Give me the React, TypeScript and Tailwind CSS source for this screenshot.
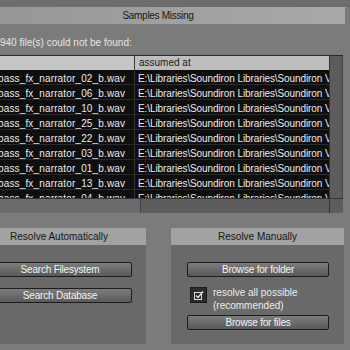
import React from 'react'

const rows = ['02', '06', '10', '25', '22', '03', '01', '13', '04']

const Button = ({ label }: { label: string }) => (
  <div className="h-[15px] rounded-[2px] border border-[#1c1c1c] bg-linear-to-b from-[#7c7c7c] to-[#5a5a5a] flex items-center justify-center text-[10px] leading-none text-[#f4f4f4] tracking-[-0.2px]">
    {label}
  </div>
)

const App = () => {
  return (
    <div className="w-[350px] h-[350px] overflow-hidden bg-[#7b7b7b] font-['Liberation_Sans',Arial,sans-serif]">
      <div className="h-[7px] bg-[#6d6d6d]" />
      <div className="-ml-[34px] w-[384px] px-[5px]">
        {/* title */}
        <div className="h-[17px] bg-linear-to-r from-[#959595] to-[#a9a9a9] flex items-center justify-center text-[10px] text-[#161616] tracking-[-0.3px]">
          Samples Missing
        </div>

        {/* info line */}
        <div className="h-[31px] pt-[12px] pl-[29px] text-[10px] leading-[14px] text-[#e6e6e6] whitespace-nowrap">
          940 file(s) could not be found:
        </div>

        {/* table */}
        <div className="mr-[2px] border-t border-[#2a2a2a]">
          <div className="flex h-[142px]">
            <div className="w-[358px] flex flex-col">
              <div className="flex h-[14px] bg-[#bebebe] text-[10px] leading-[14px] text-[#1a1a1a]">
                <div className="w-[164px] border-r border-[#3a3a3a] bg-[#c6c6c6]" />
                <div className="flex-1 pl-[4px]">assumed at</div>
              </div>
              <div className="flex-1 overflow-hidden bg-[#0e0e0e]">
                {rows.map((n) => (
                  <div key={n} className="flex h-[15px] border-b border-[#2a2a2a] text-[10px] leading-[12px] text-[#ececec] whitespace-nowrap">
                    <div className="w-[164px] pl-[27px] pt-[3px] border-r border-[#333] overflow-hidden tracking-[0.15px]">
                      bass_fx_narrator_{n}_b.wav
                    </div>
                    <div className="flex-1 pl-[3px] pt-[3px] overflow-hidden tracking-[-0.1px]">
                      E:\Libraries\Soundiron Libraries\Soundiron Voices
                    </div>
                  </div>
                ))}
              </div>
            </div>
            <div className="w-[14px] bg-[#5c5c5c] border-l border-[#333] border-r border-r-[#444]" />
          </div>
          <div className="flex h-[15px] border-t border-[#333]">
            <div className="w-[358px] bg-[#5c5c5c] flex">
              <div className="w-[170px] bg-[#6a6a6a] border-r border-[#444]" />
            </div>
            <div className="w-[14px] bg-[#5c5c5c] border-l border-[#333]" />
          </div>
        </div>

        {/* resolve panels */}
        <div className="flex pt-[15px] pl-[1px] gap-[25px]">
          <div className="w-[174px]">
            <div className="h-[17px] bg-[#a2a2a2] flex items-center justify-center text-[10px] text-[#161616]">
              Resolve Automatically
            </div>
            <div className="h-[99px] bg-[#696969] pt-[17px] pl-[16px] flex flex-col gap-[11px]">
              <div className="w-[144px]"><Button label="Search Filesystem" /></div>
              <div className="w-[144px]"><Button label="Search Database" /></div>
            </div>
          </div>
          <div className="w-[173px]">
            <div className="h-[17px] bg-[#a2a2a2] flex items-center justify-center text-[10px] text-[#161616]">
              Resolve Manually
            </div>
            <div className="h-[99px] bg-[#696969] pt-[17px] pl-[16px]">
              <div className="w-[142px]"><Button label="Browse for folder" /></div>
              <div className="flex items-start mt-[9px] h-[28px]">
                <div className="w-[17px] h-[16px] ml-[3px] mt-[1px] bg-[#2c2c2c] border border-[#1a1a1a] flex items-center justify-center">
                  <svg width="11" height="11" viewBox="0 0 11 11" fill="none">
                    <rect x="1.5" y="2.5" width="7" height="7" stroke="#d8d8d8" strokeWidth="1" />
                    <path d="M3 5.5 L5 7.5 L10 1.5" stroke="#e6e6e6" strokeWidth="1.2" />
                  </svg>
                </div>
                <div className="ml-[6px] text-[10px] leading-[13px] text-[#ececec]">
                  resolve all possible
                  <br />
                  (recommended)
                </div>
              </div>
              <div className="w-[142px] mt-[1px]"><Button label="Browse for files" /></div>
            </div>
          </div>
        </div>
      </div>
    </div>
  )
}

export default App
